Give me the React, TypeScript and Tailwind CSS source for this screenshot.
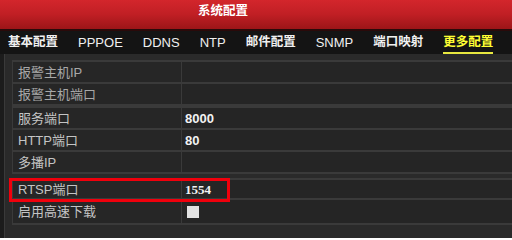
import React from "react";

const cjk = { fontFamily: '"Liberation Sans", "Noto Sans CJK SC", sans-serif' };

type Row = { label: string; value?: string; serif?: boolean; check?: boolean; dim?: boolean; highlight?: boolean; gapBefore?: boolean; tall?: boolean };

function TableRow({ r }: { r: Row }) {
  return (
    <div
      className={`relative flex border-b-2 border-[#3a3a3a] ${r.tall ? "h-[25px]" : "h-[22px]"} ${
        r.gapBefore ? "mt-[4px] border-t-2" : ""
      }`}
    >
      <div className="flex w-[170px] items-center border-l border-r border-[#3a3a3a] bg-[#262626] pl-[5px]">
        <span className={`text-[13px] leading-none ${r.dim ? "text-[#a8a8a8]" : "text-[#c4c4c4]"}`} style={cjk}>
          {r.label}
        </span>
      </div>
      <div className="flex flex-1 items-center bg-[#252525] pl-[3px]">
        {r.value && (
          <span
            className="text-[13px] font-bold leading-none text-[#f2f2f2]"
            style={{ fontFamily: r.serif ? '"Liberation Serif", serif' : '"Liberation Sans", sans-serif' }}
          >
            {r.value}
          </span>
        )}
        {r.check && <span className="ml-[2px] block h-[12px] w-[12px] bg-[#e2e2e2]" />}
      </div>
      {r.highlight && (
        <div className="pointer-events-none absolute left-[-3px] top-[-2px] z-10 h-[24px] w-[221px] border-[3px] border-[#f0000c]" />
      )}
    </div>
  );
}

export default function App() {
  const tabs: { t: string; zh: boolean; active?: boolean }[] = [
    { t: "基本配置", zh: true },
    { t: "PPPOE", zh: false },
    { t: "DDNS", zh: false },
    { t: "NTP", zh: false },
    { t: "邮件配置", zh: true },
    { t: "SNMP", zh: false },
    { t: "端口映射", zh: true },
    { t: "更多配置", zh: true, active: true },
  ];
  const group1: Row[] = [
    { label: "报警主机IP", dim: true },
    { label: "报警主机端口", dim: true },
  ];
  const group2: Row[] = [
    { label: "服务端口", value: "8000" },
    { label: "HTTP端口", value: "80" },
    { label: "多播IP" },
    { label: "RTSP端口", value: "1554", serif: true, highlight: true, gapBefore: true },
    { label: "启用高速下载", check: true, tall: true },
  ];
  return (
    <div className="h-[238px] w-[512px] overflow-hidden bg-[#1c1c1c]" style={cjk}>
      <div className="flex h-[29px] items-start bg-gradient-to-b from-[#d3262c] via-[#c01f24] to-[#9c1518] pl-[198px] pt-[4px]">
        <span className="text-[12.5px] font-bold leading-[14px] text-white" style={cjk}>系统配置</span>
      </div>
      <div className="h-[2px] bg-[#2a0a0a]" />
      <div className="flex h-[23px] items-center gap-[20px] bg-[#141414] pl-[8px]">
        {tabs.map((tab) => (
          <span
            key={tab.t}
            className={`relative font-bold leading-none ${tab.zh ? "text-[12.5px]" : "text-[13px] font-normal"} ${
              tab.active ? "text-[#ffff33]" : "text-[#f0f0f0]"
            }`}
            style={cjk}
          >
            {tab.t}
            {tab.active && <span className="absolute bottom-[-5px] left-0 right-0 h-[2px] bg-[#e8e840]" />}
          </span>
        ))}
      </div>
      <div className="ml-[4px] h-[184px] border-l border-[#3a3a3a] bg-[#2a2a2a] pl-[7px] pt-[6px]">
        <div className="border-t-2 border-[#3a3a3a]">
          {group1.map((r) => (
            <TableRow key={r.label} r={r} />
          ))}
        </div>
        <div className="border-t-2 border-[#3a3a3a]">
          {group2.map((r) => (
            <TableRow key={r.label} r={r} />
          ))}
        </div>
      </div>
    </div>
  );
}
